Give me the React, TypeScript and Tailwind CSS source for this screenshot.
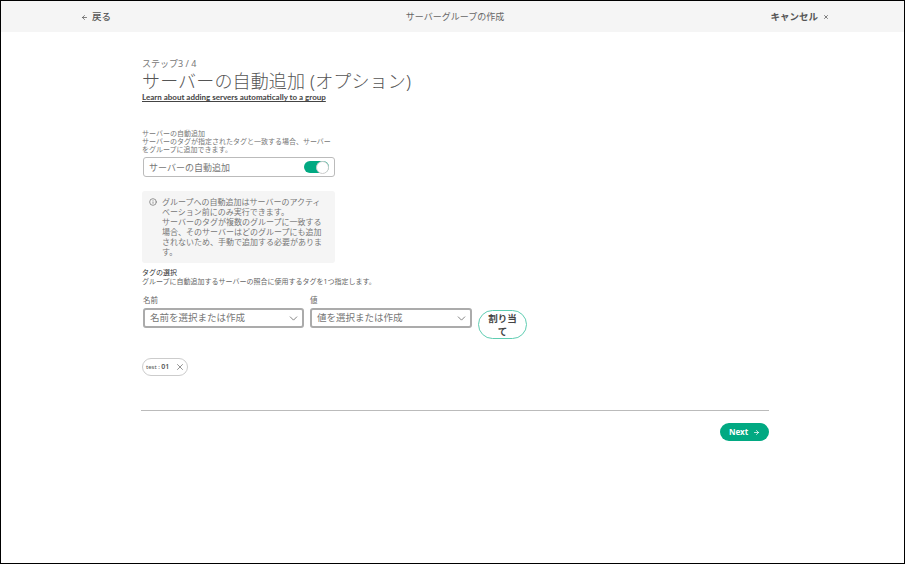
import { ArrowLeft, ArrowRight, ChevronDown, Info, X } from "lucide-react";

const font = { fontFamily: '"Noto Sans", "Noto Sans CJK JP", sans-serif' };

function TagSelect({ label, placeholder, className }: { label: string; placeholder: string; className: string }) {
  return (
    <div className={className}>
      <div className="h-[12px] text-[7.5px] leading-[12px] text-[#666]">{label}</div>
      <div className="mt-[2px] flex h-[20px] items-center justify-between rounded-[3px] border-2 border-[#ababab] pl-[5px] pr-[2px]">
        <span className="text-[9.5px] leading-none text-[#777]">{placeholder}</span>
        <ChevronDown className="h-[13px] w-[13px] text-[#666]" strokeWidth={1.5} />
      </div>
    </div>
  );
}

export default function App() {
  return (
    <div style={font} className="box-border flex h-[564px] w-[905px] flex-col border border-black bg-white text-[#444]">
      <header className="flex h-[31px] shrink-0 items-center justify-between bg-[#f5f5f5] pl-[80px] pr-[75px] pt-[1px]">
        <div className="flex w-[120px] items-center gap-[4px] text-[9.5px] font-medium text-[#555]">
          <ArrowLeft className="h-[7px] w-[7px]" strokeWidth={2.5} />
          戻る
        </div>
        <div className="text-[9px] text-[#666]">サーバーグループの作成</div>
        <div className="flex w-[120px] items-center justify-end gap-[5px] text-[9.5px] font-bold text-[#555]">
          キャンセル
          <X className="h-[6px] w-[6px]" strokeWidth={3} />
        </div>
      </header>

      <main className="pl-[141px] pr-[135px]">
        <div className="pt-[26px] text-[9px] leading-[12px] text-[#777]">ステップ3 / 4</div>
        <h1 className="text-[18px] font-light leading-[22px] tracking-[0.15px] text-[#555]">サーバーの自動追加 (オプション)</h1>
        <a className="block text-[8px] font-bold leading-[11px] text-[#444] underline" style={{ fontFamily: "Lato, sans-serif" }}>
          Learn about adding servers automatically to a group
        </a>

        <div className="mt-[27px] w-[194px] text-[7px] leading-[8px] text-[#777]">
          <div>サーバーの自動追加</div>
          <div>サーバーのタグが指定されたタグと一致する場合、サーバーをグループに追加できます。</div>
        </div>
        <div className="ml-[1px] mt-[3px] flex h-[20px] w-[192px] items-center justify-between rounded-[3px] border border-[#bbb] pl-[5px] pr-[5px]">
          <span className="text-[9px] leading-none text-[#777]">サーバーの自動追加</span>
          <div className="flex h-[12px] w-[25px] items-center justify-end rounded-full bg-[#01a982]">
            <div className="h-[13px] w-[13px] rounded-full border border-[#ccc] bg-white" />
          </div>
        </div>

        <div className="mt-[14px] flex h-[72px] w-[193px] gap-[5px] rounded-[3px] bg-[#f5f5f5] pl-[7px] pr-[7px] pt-[6px]">
          <Info className="mt-[1px] h-[8px] w-[8px] shrink-0 text-[#666]" strokeWidth={2} />
          <p className="text-[8px] leading-[10px] text-[#777]">
            グループへの自動追加はサーバーのアクティベーション前にのみ実行できます。
            <br />
            サーバーのタグが複数のグループに一致する場合、そのサーバーはどのグループにも追加されないため、手動で追加する必要があります。
          </p>
        </div>

        <div className="mt-[5px] text-[7px] leading-[9px] text-[#333]">タグの選択</div>
        <div className="text-[7px] leading-[10px] text-[#666]">グループに自動追加するサーバーの照合に使用するタグを1つ指定します。</div>

        <div className="mt-[7px] flex items-start">
          <TagSelect className="ml-[1px] w-[161px]" label="名前" placeholder="名前を選択または作成" />
          <TagSelect className="ml-[6px] w-[162px]" label="値" placeholder="値を選択または作成" />
          <button className="ml-[6px] mt-[16px] h-[29px] w-[49px] rounded-full border border-[#5fcdb2] text-[9.5px] font-semibold leading-[13px] text-[#444]">
            割り当
            <br />て
          </button>
        </div>

        <div className="mt-[19px] flex h-[18px] w-[46px] items-center justify-between rounded-full border border-[#ccc] pl-[3px] pr-[2px]">
          <span className="whitespace-nowrap text-[6px] text-[#555]">
            test : <span className="text-[7px] font-semibold">01</span>
          </span>
          <X className="h-[10px] w-[10px] text-[#555]" strokeWidth={1.5} />
        </div>

        <div className="-ml-[1px] mt-[34px] w-[628px] border-t border-[#bbb]" />
        <div className="-ml-[1px] mt-[12px] flex w-[628px] justify-end">
          <button className="flex h-[18px] w-[49px] items-center justify-center gap-[5px] rounded-full bg-[#01a982] text-[8px] font-bold text-white">
            Next
            <ArrowRight className="h-[7px] w-[7px]" strokeWidth={2.5} />
          </button>
        </div>
      </main>
    </div>
  );
}
